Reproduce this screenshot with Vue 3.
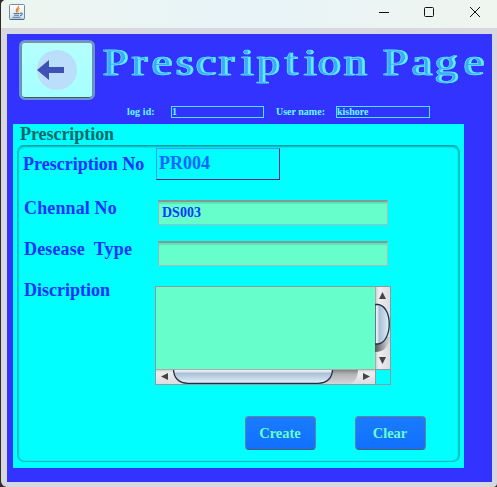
<script setup>
const word = [
  ['P', 102], ['r', 131], ['e', 151], ['s', 175], ['c', 195], ['r', 218],
  ['i', 240], ['p', 256], ['t', 284], ['i', 303], ['o', 317], ['n', 343],
  [' ', 370], ['P', 382], ['a', 411], ['g', 434], ['e', 463]
]
const stretch = 1.2
const title = word.map(([char]) => char).join('')
const positions = word.map(([, left]) => ((left - 100) / stretch).toFixed(2)).join(' ')
</script>

<template>
  <div class="window">
    <header class="titlebar">
      <svg class="java" width="16" height="16" viewBox="0 0 16 16">
        <defs>
          <linearGradient id="jv" x1="0" y1="0" x2="0" y2="1">
            <stop offset="0" stop-color="#fff" />
            <stop offset="1" stop-color="#d3e0ec" />
          </linearGradient>
        </defs>
        <rect x=".5" y=".5" width="15" height="15" rx="1" fill="url(#jv)" stroke="#6f8aa5" />
        <path d="M1 15.3H15" stroke="#3f6488" />
        <path d="M9.5 2C10.5 4 5.5 5 7.8 8.5M10.5 4.5C8 5.5 8.5 6.5 9 8.3" fill="none" stroke="#ee8024" stroke-width="1.2" />
        <path d="M4.5 9.5H10.5M5 11.2H10M3.5 13.3H11.5M11 9.4C14.5 8.3 13.5 11.4 11 11.6" fill="none" stroke="#46789f" stroke-width="1.1" />
      </svg>
      <svg class="controls" width="104" height="12" viewBox="0 0 104 12" fill="none" stroke="#111" stroke-width="1">
        <path d="M0 6.5H10" />
        <rect x="45.5" y="1.5" width="9" height="9" rx="1" />
        <path d="M91 1L101 11M101 1L91 11" />
      </svg>
    </header>

    <main class="page">
      <section class="banner">
        <button class="back" aria-label="Back">
          <svg width="40" height="40" viewBox="0 0 40 40">
            <circle cx="20" cy="20" r="20" fill="#bbdefb" />
            <path d="M0 20L12 10V17H27V23H12V30Z" fill="#3f51b5" />
          </svg>
        </button>
        <svg class="heading" width="390" height="60" viewBox="0 0 390 60">
          <text transform="scale(1.2 1)" :x="positions" y="37">{{ title }}</text>
        </svg>
      </section>

      <section class="session">
        <span class="log-label">log id:</span><span class="small-field">1</span>
        <span class="user-label">User name:</span><span class="small-field user">kishore</span>
      </section>

      <section class="panel">
        <h2>Prescription</h2>
        <div class="etched">
          <div class="row first"><label>Prescription No</label><div class="number">PR004</div></div>
          <div class="row channel"><label>Chennal No</label><div class="field">DS003</div></div>
          <div class="row disease"><label>Desease&nbsp; Type</label><div class="field"></div></div>
          <div class="row details">
            <label>Discription</label>
            <div class="area">
              <div class="text"></div>
              <svg width="15" height="82" viewBox="0 0 15 82">
                <defs>
                  <linearGradient id="track">
                    <stop offset="0" stop-color="#c9c9cd" /><stop offset=".25" stop-color="#eeeef1" /><stop offset="1" stop-color="#dcdce1" />
                  </linearGradient>
                  <linearGradient id="thumb">
                    <stop offset="0" stop-color="#fafcff" /><stop offset=".2" stop-color="#d8e2ef" /><stop offset=".3" stop-color="#a9bed3" /><stop offset="1" stop-color="#e2f0fa" />
                  </linearGradient>
                  <linearGradient id="shade"><stop offset="0" stop-color="#555" /><stop offset=".8" stop-color="#c8c8cc" /></linearGradient>
                </defs>
                <rect width="15" height="82" fill="url(#track)" />
                <path d="M.5 0V82" stroke="#aaa" />
                <path d="M0 50H15C14 59 9 65 0 65Z" fill="url(#shade)" />
                <path d="M0 17.5H3C18 19 18 55 3 57H0Z" fill="url(#thumb)" stroke="#203044" stroke-width="1.3" />
                <path d="M4 12L7.5 5L11 12ZM4 70L7.5 77L11 70Z" fill="#444" />
              </svg>
              <svg width="219" height="15" viewBox="0 0 219 15">
                <defs>
                  <linearGradient id="htrack" x1="0" y1="0" x2="0" y2="1">
                    <stop offset="0" stop-color="#c9c9cd" /><stop offset=".25" stop-color="#eeeef1" /><stop offset="1" stop-color="#dcdce1" />
                  </linearGradient>
                  <linearGradient id="hthumb" x1="0" y1="0" x2="0" y2="1">
                    <stop offset="0" stop-color="#fafcff" /><stop offset=".2" stop-color="#d8e2ef" /><stop offset=".3" stop-color="#a9bed3" /><stop offset="1" stop-color="#e2f4fc" />
                  </linearGradient>
                  <linearGradient id="hshade" x1="0" y1="0" x2="0" y2="1"><stop offset="0" stop-color="#777" /><stop offset=".35" stop-color="#b4b4b8" /><stop offset="1" stop-color="#d4d4d9" /></linearGradient>
                </defs>
                <rect width="219" height="15" fill="url(#htrack)" />
                <path d="M160 0H202C202 8 199 13 194 15H160Z" fill="url(#hshade)" />
                <path d="M17.5 0C17.5 9 23 14.3 32 14.3H162C171 14.3 176.5 9 176.5 0Z" fill="url(#hthumb)" stroke="#203044" stroke-width="1.3" />
                <path d="M0 .5H219" stroke="#aaa" />
                <path d="M12 4V11L5 7.5ZM207 4V11L214 7.5Z" fill="#444" />
              </svg>
              <div class="corner"></div>
            </div>
          </div>
          <div class="actions"><button>Create</button><button>Clear</button></div>
        </div>
      </section>
    </main>
  </div>
</template>

<style>
body { margin: 0; overflow: hidden; background: #33292d; }
</style>

<style scoped>
* { box-sizing: border-box; }
.window {
  width: 496px; height: 487px; margin-left: 1px; padding: 0 4px 5px 6px;
  background: #d7d8df; border-radius: 5px 0 4px 6px;
  font-family: "Liberation Serif", serif; font-weight: bold;
}
.titlebar {
  height: 28px; margin: 0 -4px 6px -6px; padding: 4px 14px 0 8px;
  display: flex; justify-content: space-between;
  background: linear-gradient(90deg, #edf5ef, #e8f4f8 50%, #eff5ef);
  border-radius: 5px 0 0 0;
}
.controls { margin-top: 2px; }
.page { width: 485px; height: 448px; background: #3333ff; padding: 6px 0 0 6px; }
.banner { display: flex; height: 60px; padding-left: 6px; }
.back {
  width: 76px; height: 60px; padding: 0; flex: none;
  display: flex; align-items: center; justify-content: center;
  border: 2px solid #6795d4; border-radius: 6px;
  background: linear-gradient(#b5ffff, #a5ffff);
  box-shadow: inset 0 1px #888f99, inset 1px 0 #76909a, inset -1px 0 #76909a, inset 0 -1px #46575b;
}
.back svg { margin-right: 1px; }
.heading { flex: none; margin-left: 5px; margin-top: -2px; overflow: hidden; filter: drop-shadow(2px 0 0 #5cf2ff); }
.heading text { font: normal 38px "Liberation Serif", serif; fill: #42a6ff; stroke: #5cf8ff; stroke-width: .5; white-space: pre; }
.session { display: flex; height: 12px; margin-top: 6px; padding-left: 114px; font-size: 10px; line-height: 11px; color: #66ffff; }
.log-label { width: 44px; letter-spacing: .12px; }
.small-field { width: 93px; height: 12px; border: 1px solid #4de6ff; line-height: 10px; }
.small-field.user { width: 94px; }
.user-label { width: 60px; margin-left: 12px; }
.panel { width: 451px; height: 344px; margin-top: 6px; padding: 0 4px 6px; background: #00ffff; }
h2 { height: 21px; margin: 0; padding-left: 3px; font-size: 18px; line-height: 20px; letter-spacing: -.05px; color: #066a6a; }
.etched {
  height: 317px; padding: 2px 0 0 5px; border: 1px solid #00bfc4; border-top-color: #00a2a8; border-radius: 7px;
  box-shadow: inset 0 1px 2px #00a9ad, inset 1px 0 1px #00d4d7, inset -1px 0 1px #00c9cc;
}
.row { display: flex; }
label { width: 134px; flex: none; padding-left: 1px; font-size: 18px; line-height: 20px; color: #1432ff; }
.first { height: 51px; }
.first label { width: 133px; padding: 6px 0 0 0; }
.number {
  width: 124px; height: 32px; padding-left: 2px; font-size: 18px; line-height: 29px; color: #0866ff;
  border: 1px solid #222c70; border-top-color: #4b93ff; border-left-color: #4b93ff;
}
.field {
  width: 230px; height: 25px; margin: 1px 0 0 1px; padding-left: 3px; background: #66ffcc;
  border: 1px solid #a9bdb8; border-top: 2px solid #839b92; border-left-color: #99b5af;
  box-shadow: inset 0 2px 1px #5ce4b9; font-size: 14px; line-height: 21px; color: #0b38ff;
}
.channel, .disease { height: 41px; }
.channel label, .disease label { margin-top: -1px; letter-spacing: .13px; }
.details { height: 99px; margin-top: 5px; }
.details label { width: 132px; margin-top: -6px; }
.area {
  width: 236px; height: 99px; display: grid; grid-template-columns: 219px 15px; grid-template-rows: 82px 15px;
  border: 1px solid #8d9b9b;
}
.area svg { display: block; }
.text { background: #66ffcc; }
.corner { background: #00ffff; border: 1px solid #8d9b9b; border-width: 1px 0 0 1px; }
.actions { display: flex; gap: 39px; margin: 31px 0 0 222px; }
.actions button {
  width: 71px; height: 34px; padding: 0 1px 0 0; border: 1px solid #668099; border-bottom-color: #555b6a; border-radius: 4px;
  background: linear-gradient(#1a7cff, #1070ff); color: #66ffcc;
  font: bold 14.5px "Liberation Serif", serif;
}
</style>
